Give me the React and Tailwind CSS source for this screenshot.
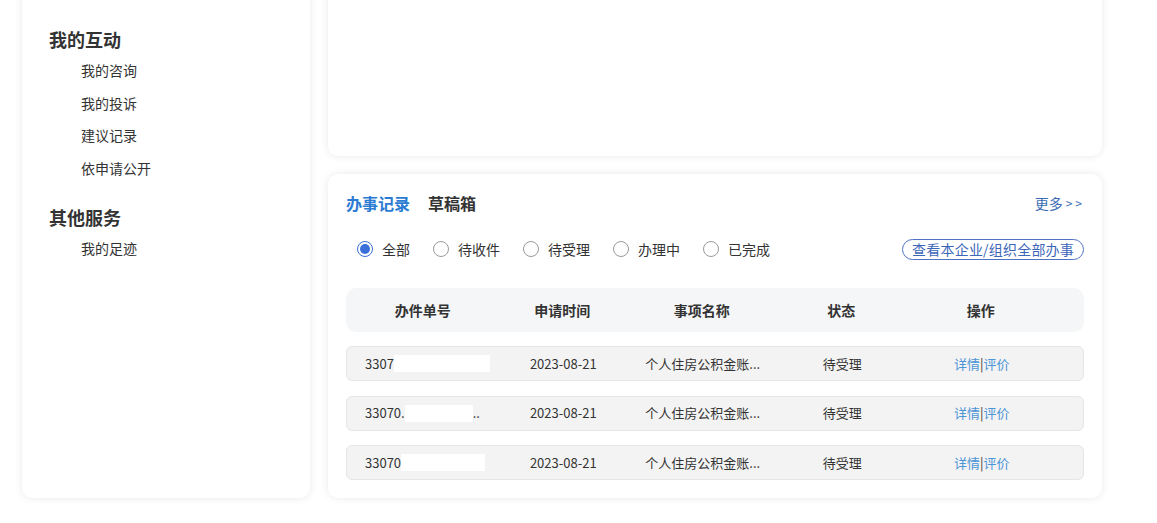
import React from "react";

const font = { fontFamily: '"Noto Sans CJK SC", "Noto Sans", sans-serif' };

function Radio({ checked, label }) {
  return (
    <label className="flex items-center gap-[9px] text-[14px] text-[#333]">
      <span
        className={
          "flex h-[16px] w-[16px] items-center justify-center rounded-full border " +
          (checked ? "border-[#3a6fd8]" : "border-[#9a9a9a]")
        }
      >
        {checked && <span className="h-[10px] w-[10px] rounded-full bg-[#3b6fd9]" />}
      </span>
      <span>{label}</span>
    </label>
  );
}

function Row({ prefix, maskW, suffix }) {
  return (
    <div className="grid h-[35px] grid-cols-[repeat(5,139.5px)] items-center rounded-[6px] border border-[#e6e6e6] bg-[#f3f3f3] pl-[7px] text-[13px] text-[#333]">
      <div className="flex items-center pl-[11px]">
        <span>{prefix}</span>
        <span className="h-[17px] bg-white" style={{ width: maskW }} />
        {suffix && <span>{suffix}</span>}
      </div>
      <div className="text-center">2023-08-21</div>
      <div className="text-center">个人住房公积金账...</div>
      <div className="text-center">待受理</div>
      <div className="text-center text-[#4b94d6]">
        详情<span className="text-[#333]">|</span>评价
      </div>
    </div>
  );
}

export default function App() {
  return (
    <div className="h-[523px] w-[1157px] overflow-hidden bg-white" style={font}>
      <div className="-mt-[20px] ml-[22px] flex gap-[18px]">
        <aside className="h-[518px] w-[288px] rounded-[10px] bg-white pl-[27px] pt-[47px] shadow-[0_0_8px_rgba(0,0,0,0.09)]">
          <h3 className="text-[18px] font-bold leading-[24px] text-[#333]">我的互动</h3>
          <ul className="mt-[3px] pl-[32px] text-[14px] leading-[32.5px] text-[#333]">
            <li>我的咨询</li>
            <li>我的投诉</li>
            <li>建议记录</li>
            <li>依申请公开</li>
          </ul>
          <h3 className="mt-[21px] text-[18px] font-bold leading-[24px] text-[#333]">其他服务</h3>
          <ul className="mt-[3px] pl-[32px] text-[14px] leading-[32.5px] text-[#333]">
            <li>我的足迹</li>
          </ul>
        </aside>

        <div className="flex w-[774px] flex-col gap-[18px]">
          <div className="h-[176px] rounded-[10px] bg-white shadow-[0_0_8px_rgba(0,0,0,0.09)]" />
          <section className="h-[324px] rounded-[10px] bg-white px-[18px] pt-[17px] shadow-[0_0_8px_rgba(0,0,0,0.09)]">
            <div className="flex items-center justify-between">
              <div className="flex items-center gap-[18px] text-[16px] font-bold leading-[24px]">
                <span className="text-[#2b7bd3]">办事记录</span>
                <span className="text-[#333]">草稿箱</span>
              </div>
              <span className="flex items-center gap-[3px] pr-[2px] text-[14px] text-[#3a6db5]">
                <span>更多</span>
                <span className="text-[12px]">&gt;</span>
                <span className="text-[12px]">&gt;</span>
              </span>
            </div>

            <div className="mt-[23px] flex h-[22px] items-center justify-between">
              <div className="flex items-center gap-[23px] pl-[11px]">
                <Radio checked label="全部" />
                <Radio label="待收件" />
                <Radio label="待受理" />
                <Radio label="办理中" />
                <Radio label="已完成" />
              </div>
              <span className="flex h-[21px] items-center rounded-full border border-[#4f72c4] px-[9px] text-[14px] tracking-[0.2px] text-[#3d66b8]">
                查看本企业/组织全部办事
              </span>
            </div>

            <div className="mt-[28px] grid h-[44px] grid-cols-[repeat(5,139.5px)] items-center rounded-[10px] bg-[#f5f6f7] pl-[7px] text-center text-[14px] font-bold text-[#333]">
              <div>办件单号</div>
              <div>申请时间</div>
              <div>事项名称</div>
              <div>状态</div>
              <div>操作</div>
            </div>

            <div className="mt-[14px] flex flex-col gap-[14.5px]">
              <Row prefix="3307" maskW="96px" />
              <Row prefix="33070." maskW="68px" suffix=".." />
              <Row prefix="33070" maskW="84px" />
            </div>
          </section>
        </div>
      </div>
    </div>
  );
}
